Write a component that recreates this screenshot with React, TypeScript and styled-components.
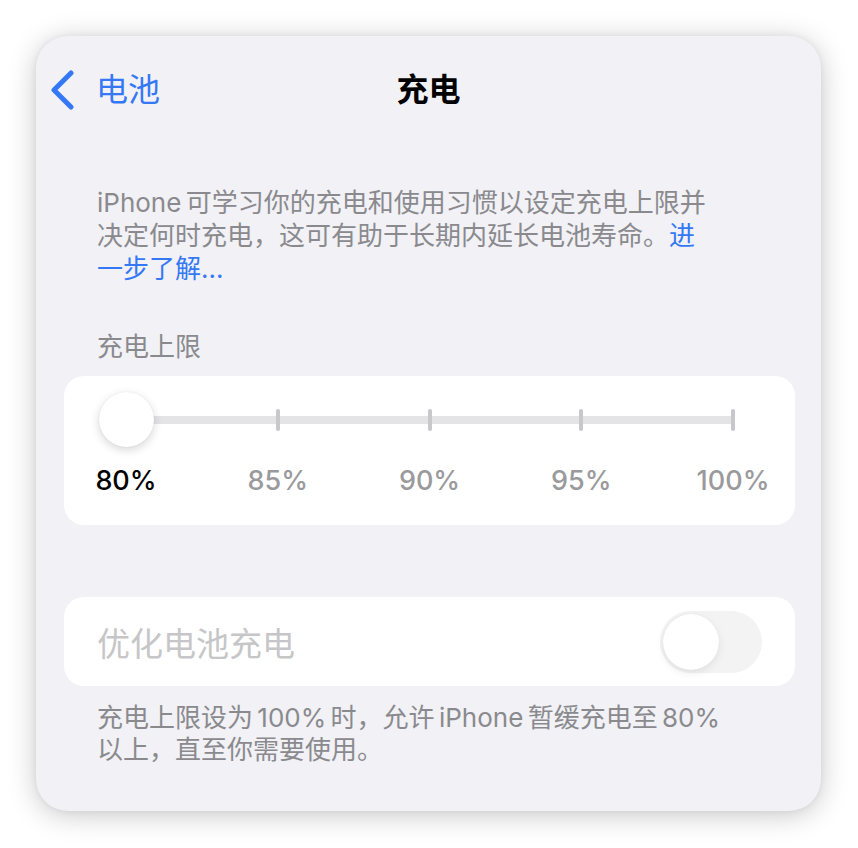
import React from "react";
import styled, { createGlobalStyle } from "styled-components";

const Global = createGlobalStyle`
  html, body { margin: 0; padding: 0; background: #ffffff; }
  body {
    font-family: Inter, "Noto Sans CJK SC", "Noto Sans", sans-serif;
    -webkit-font-smoothing: antialiased;
  }
`;

const Page = styled.div`
  width: 858px;
  height: 848px;
  padding: 36px 0 0 36px;
  box-sizing: border-box;
`;

const Panel = styled.div`
  width: 785px;
  height: 775px;
  box-sizing: border-box;
  background: #f1f1f6;
  border-radius: 32px;
  box-shadow: 0 4px 28px rgba(0, 0, 0, 0.22), 0 0 6px rgba(0, 0, 0, 0.06);
  display: flex;
  flex-direction: column;
  padding: 0 26px 0 28px;
`;

const Nav = styled.div`
  display: grid;
  grid-template-columns: 1fr auto 1fr;
  align-items: center;
  height: 40px;
  margin: 34px 0 0 -14px;
`;

const Back = styled.div`
  display: flex;
  align-items: center;
  gap: 18px;
  color: #3478f6;
  font-size: 32px;
  line-height: 40px;
`;

const Title = styled.div`
  font-size: 32px;
  font-weight: 700;
  color: #000;
  line-height: 40px;
  margin-left: 12px;
`;

const Paragraph = styled.p<{ $top: number; $width?: number }>`
  margin: ${(p) => p.$top}px 0 0 33px;
  width: ${(p) => p.$width ?? 620}px;
  font-size: 26px;
  line-height: 33px;
  color: #8a8a8e;
  letter-spacing: 0;
`;

const Link = styled.span`
  color: #3478f6;
`;

const SectionHeader = styled.div`
  margin: 45px 0 0 33px;
  font-size: 26px;
  line-height: 33px;
  color: #8a8a8e;
`;

const Card = styled.div<{ $top: number; $height: number }>`
  margin-top: ${(p) => p.$top}px;
  height: ${(p) => p.$height}px;
  box-sizing: border-box;
  background: #ffffff;
  border-radius: 20px;
`;

const SliderCard = styled(Card)`
  padding: 16px 62px 0 62px;
  display: flex;
  flex-direction: column;
`;

const TrackArea = styled.div`
  position: relative;
  height: 56px;
  display: flex;
  align-items: center;
`;

const Track = styled.div`
  position: relative;
  flex: 1;
  height: 8px;
  background: #e4e4e6;
  display: flex;
  justify-content: space-between;
  align-items: center;
`;

const Tick = styled.div<{ $hidden?: boolean }>`
  width: 4px;
  height: 22px;
  border-radius: 2px;
  background: #c8c8ca;
  margin: 0 -2px;
  visibility: ${(p) => (p.$hidden ? "hidden" : "visible")};
`;

const Thumb = styled.div`
  position: absolute;
  left: -27px;
  top: 0;
  width: 55px;
  height: 55px;
  border-radius: 50%;
  background: #fff;
  box-shadow: 0 3px 10px rgba(0, 0, 0, 0.16), 0 0 1px rgba(0, 0, 0, 0.12);
`;

const Labels = styled.div`
  display: flex;
  justify-content: space-between;
  margin-top: 17px;
`;

const LabelSlot = styled.div`
  width: 0;
  display: flex;
  justify-content: center;
`;

const Label = styled.span<{ $active?: boolean }>`
  white-space: nowrap;
  font-size: 27px;
  line-height: 32px;
  font-weight: 500;
  color: ${(p) => (p.$active ? "#000" : "#9a9a9c")};
`;

const ToggleCard = styled(Card)`
  display: flex;
  align-items: center;
  justify-content: space-between;
  padding: 0 33px;
`;

const ToggleLabel = styled.span`
  font-size: 33px;
  color: #c6c6c8;
`;

const Switch = styled.div`
  width: 102px;
  height: 62px;
  border-radius: 31px;
  background: #f3f3f4;
  display: flex;
  align-items: center;
  padding: 0 3px;
  box-sizing: border-box;
`;

const SwitchKnob = styled.div`
  width: 56px;
  height: 56px;
  border-radius: 50%;
  background: #fff;
  box-shadow: 0 3px 8px rgba(0, 0, 0, 0.08), 0 0 1px rgba(0, 0, 0, 0.08);
`;

const Footer = styled(Paragraph)`
  line-height: 32px;
`;

const values = ["80%", "85%", "90%", "95%", "100%"];

export default function App() {
  return (
    <>
      <Global />
      <Page>
        <Panel>
          <Nav>
            <Back>
              <svg width="28" height="40" viewBox="0 0 28 40">
                <path
                  d="M21 3 L4 20 L21 37"
                  fill="none"
                  stroke="#3478f6"
                  strokeWidth="5"
                  strokeLinecap="round"
                  strokeLinejoin="round"
                />
              </svg>
              <span>电池</span>
            </Back>
            <Title>充电</Title>
            <div />
          </Nav>
          <Paragraph $top={76}>
            iPhone{"\u2006"}可学习你的充电和使用习惯以设定充电上限并决定何时充电，这可有助于长期内延长电池寿命。
            <Link>进一步了解...</Link>
          </Paragraph>
          <SectionHeader>充电上限</SectionHeader>
          <SliderCard $top={13} $height={149}>
            <TrackArea>
              <Track>
                <Tick $hidden />
                <Tick />
                <Tick />
                <Tick />
                <Tick />
              </Track>
              <Thumb />
            </TrackArea>
            <Labels>
              {values.map((v, i) => (
                <LabelSlot key={v}>
                  <Label $active={i === 0}>{v}</Label>
                </LabelSlot>
              ))}
            </Labels>
          </SliderCard>
          <ToggleCard $top={72} $height={89}>
            <ToggleLabel>优化电池充电</ToggleLabel>
            <Switch>
              <SwitchKnob />
            </Switch>
          </ToggleCard>
          <Footer $top={16} $width={650}>
            充电上限设为{"\u2006"}100%{"\u2006"}时，允许{"\u2006"}iPhone{"\u2006"}暂缓充电至{"\u2006"}80%{"\u2006"}以上，直至你需要使用。
          </Footer>
        </Panel>
      </Page>
    </>
  );
}
